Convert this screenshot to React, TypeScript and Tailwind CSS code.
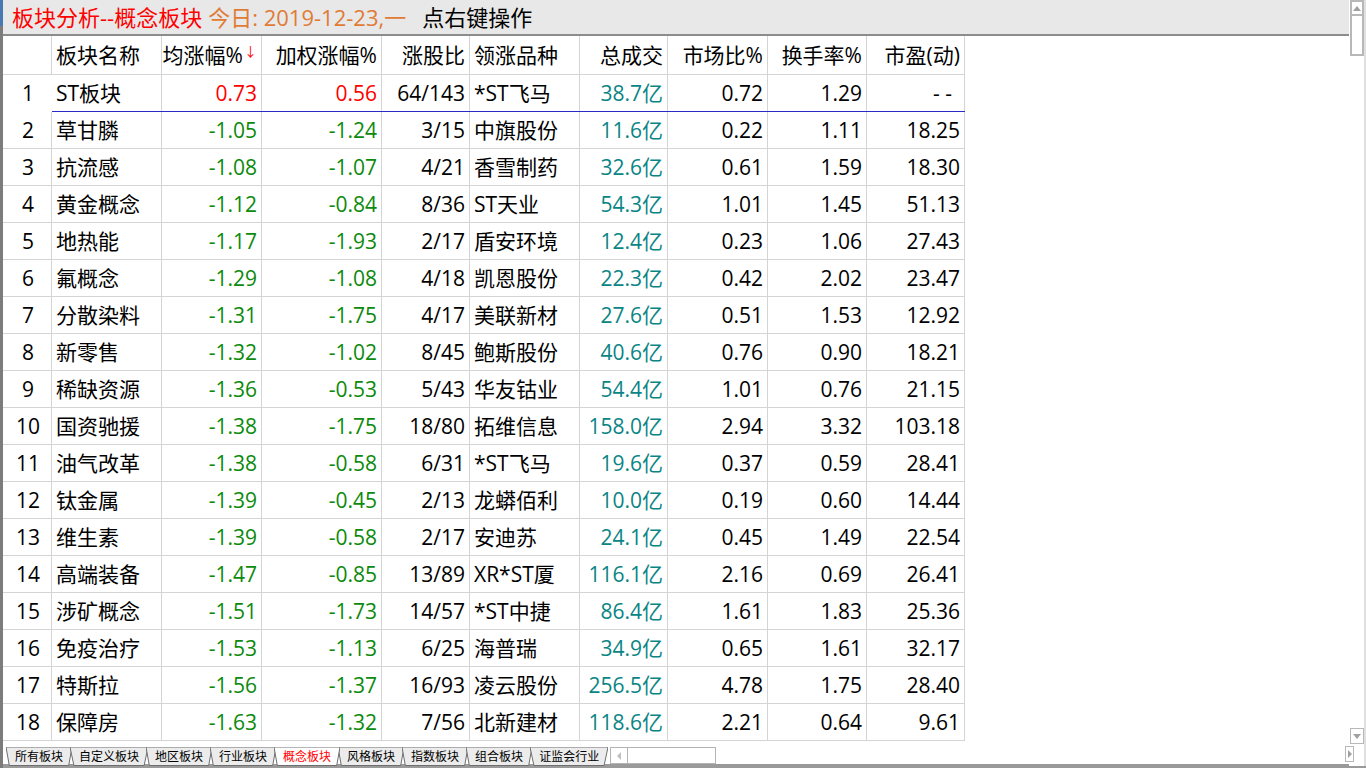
import React from "react";

type Row = [string, string, string, string, string, string, string, string, string];

const rows: Row[] = [
  ["ST板块", "0.73", "0.56", "64/143", "*ST飞马", "38.7亿", "0.72", "1.29", "- -"],
  ["草甘膦", "-1.05", "-1.24", "3/15", "中旗股份", "11.6亿", "0.22", "1.11", "18.25"],
  ["抗流感", "-1.08", "-1.07", "4/21", "香雪制药", "32.6亿", "0.61", "1.59", "18.30"],
  ["黄金概念", "-1.12", "-0.84", "8/36", "ST天业", "54.3亿", "1.01", "1.45", "51.13"],
  ["地热能", "-1.17", "-1.93", "2/17", "盾安环境", "12.4亿", "0.23", "1.06", "27.43"],
  ["氟概念", "-1.29", "-1.08", "4/18", "凯恩股份", "22.3亿", "0.42", "2.02", "23.47"],
  ["分散染料", "-1.31", "-1.75", "4/17", "美联新材", "27.6亿", "0.51", "1.53", "12.92"],
  ["新零售", "-1.32", "-1.02", "8/45", "鲍斯股份", "40.6亿", "0.76", "0.90", "18.21"],
  ["稀缺资源", "-1.36", "-0.53", "5/43", "华友钴业", "54.4亿", "1.01", "0.76", "21.15"],
  ["国资驰援", "-1.38", "-1.75", "18/80", "拓维信息", "158.0亿", "2.94", "3.32", "103.18"],
  ["油气改革", "-1.38", "-0.58", "6/31", "*ST飞马", "19.6亿", "0.37", "0.59", "28.41"],
  ["钛金属", "-1.39", "-0.45", "2/13", "龙蟒佰利", "10.0亿", "0.19", "0.60", "14.44"],
  ["维生素", "-1.39", "-0.58", "2/17", "安迪苏", "24.1亿", "0.45", "1.49", "22.54"],
  ["高端装备", "-1.47", "-0.85", "13/89", "XR*ST厦", "116.1亿", "2.16", "0.69", "26.41"],
  ["涉矿概念", "-1.51", "-1.73", "14/57", "*ST中捷", "86.4亿", "1.61", "1.83", "25.36"],
  ["免疫治疗", "-1.53", "-1.13", "6/25", "海普瑞", "34.9亿", "0.65", "1.61", "32.17"],
  ["特斯拉", "-1.56", "-1.37", "16/93", "凌云股份", "256.5亿", "4.78", "1.75", "28.40"],
  ["保障房", "-1.63", "-1.32", "7/56", "北新建材", "118.6亿", "2.21", "0.64", "9.61"],
];

const tabs = ["所有板块", "自定义板块", "地区板块", "行业板块", "概念板块", "风格板块", "指数板块", "组合板块", "证监会行业"];

const grid =
  "grid grid-cols-[49px_110px_100px_120px_88px_110px_88px_100px_99px_98px] w-[962px]";
const cell = "border-r border-[#d4d4d4] flex items-center px-[4px] whitespace-nowrap";

function priceColor(v: string) {
  if (v.startsWith("-")) return "text-[#0c8a0c]";
  if (v === "0.00") return "text-black";
  return "text-[#ff0000]";
}

function Tab({ label, active }: { label: string; active?: boolean }) {
  return (
    <div className={`relative h-[19px] flex items-center px-[9px] -mr-[2px] ${active ? "z-10" : ""}`}>
      <svg className="absolute inset-0 w-full h-full" preserveAspectRatio="none" viewBox="0 0 100 19">
        <polygon
          points="0,0 100,0 95,18.5 5,18.5"
          fill={active ? "#ffffff" : "#ececec"}
          stroke="#6e6e6e"
          strokeWidth="1"
          vectorEffect="non-scaling-stroke"
        />
      </svg>
      <span className={`relative text-[12px] leading-none ${active ? "text-[#ff0000]" : "text-black"}`}>{label}</span>
    </div>
  );
}

export default function App() {
  return (
    <div
      className="w-[1366px] h-[768px] bg-white flex overflow-hidden text-black"
      style={{ fontFamily: '"Open Sans", "Noto Sans CJK SC", sans-serif' }}
    >
      {/* left frame edge */}
      <div className="w-[3px] flex flex-col">
        <div className="h-[26px] bg-[#4a78b0]" />
        <div className="flex-1 bg-[#7c7c7c]" />
      </div>

      <div className="w-[1346px] flex flex-col">
        {/* title bar */}
        <div className="h-[36px] bg-[#e8e8e8] border-b-2 border-[#8c8c8c] flex items-center pl-[9px] text-[22px] leading-none gap-[6px]">
          <span className="text-[#ff0000]">板块分析--概念板块</span>
          <span className="text-[#e07b35]">今日: 2019-12-23,一</span>
          <span className="ml-[10px]">点右键操作</span>
        </div>

        {/* table */}
        <div className="flex-1 flex flex-col text-[21px] leading-none">
          <div className={`${grid} h-[39px] border-b border-[#d4d4d4]`}>
            <div className={cell} />
            <div className={`${cell}`}>板块名称</div>
            <div className={`${cell} justify-end`}>
              均涨幅%<span className="text-[#ff0000] text-[13px] ml-[1px] -mt-[8px]">↓</span>
            </div>
            <div className={`${cell} justify-end`}>加权涨幅%</div>
            <div className={`${cell} justify-end`}>涨股比</div>
            <div className={`${cell}`}>领涨品种</div>
            <div className={`${cell} justify-end`}>总成交</div>
            <div className={`${cell} justify-end`}>市场比%</div>
            <div className={`${cell} justify-end`}>换手率%</div>
            <div className={`${cell} justify-end`}>市盈(动)</div>
          </div>

          {rows.map((r, i) => (
            <div
              key={i}
              className={`${grid} h-[37px] border-b ${i === 0 ? "border-[#2a2ac8]" : "border-[#d4d4d4]"}`}
            >
              <div className={`${cell} justify-center pl-[6px] ${i === 0 ? "border-b border-white -mb-px" : ""}`}>{i + 1}</div>
              <div className={cell}>{r[0]}</div>
              <div className={`${cell} justify-end ${priceColor(r[1])}`}>{r[1]}</div>
              <div className={`${cell} justify-end ${priceColor(r[2])}`}>{r[2]}</div>
              <div className={`${cell} justify-end`}>{r[3]}</div>
              <div className={cell}>{r[4]}</div>
              <div className={`${cell} justify-end text-[#0a8585]`}>{r[5]}</div>
              <div className={`${cell} justify-end`}>{r[6]}</div>
              <div className={`${cell} justify-end`}>{r[7]}</div>
              <div className={`${cell} justify-end ${i === 0 ? "pr-[12px]" : ""}`}>{r[8]}</div>
            </div>
          ))}
        </div>

        {/* sheet tabs + horizontal scroll */}
        <div className="h-[24px] flex items-start pt-[3px] pl-[3px] border-b-4 border-[#9a9a9a]">
          {tabs.map((t) => (
            <Tab key={t} label={t} active={t === "概念板块"} />
          ))}
          <div className="ml-[4px] w-[106px] h-[17px] border border-[#b4b4b4] bg-white flex">
            <div className="w-[17px] h-full border-r border-[#b4b4b4] flex items-center justify-center">
              <svg width="6" height="8" viewBox="0 0 6 8">
                <polygon points="5,0 5,8 1,4" fill="#c0c0c0" />
              </svg>
            </div>
          </div>
        </div>
      </div>

      {/* vertical scrollbar */}
      <div className="w-[17px] flex flex-col items-start pl-[1px] border-r-2 border-[#e0e0e0]">
        <div className="w-[14px] h-[16px] border-2 border-[#b8b8b8] flex items-center justify-center">
          <svg width="8" height="5" viewBox="0 0 8 5">
            <polygon points="0,5 8,5 4,0" fill="#a0a0a0" />
          </svg>
        </div>
        <div className="w-[14px] h-[40px] border-2 border-t-0 border-[#b8b8b8]" />
        <div className="flex-1" />
        <div className="w-[14px] h-[16px] border border-[#b8b8b8] flex items-center justify-center">
          <svg width="8" height="5" viewBox="0 0 8 5">
            <polygon points="0,0 8,0 4,5" fill="#a0a0a0" />
          </svg>
        </div>
        <div className="w-[9px] h-[16px] mt-[2px] mb-[4px] -ml-[5px] border border-[#b8b8b8] flex items-center justify-center">
          <svg width="4" height="8" viewBox="0 0 4 8">
            <polygon points="0,0 4,4 0,8" fill="#a0a0a0" />
          </svg>
        </div>
        <div className="h-[2px] -ml-[2px] w-[19px] bg-[#9a9a9a]" />
      </div>
    </div>
  );
}
